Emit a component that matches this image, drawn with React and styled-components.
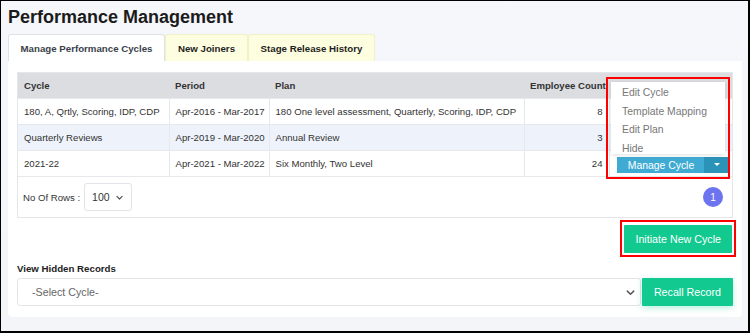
import React from "react";
import styled, { createGlobalStyle } from "styled-components";

const GlobalStyle = createGlobalStyle`
  html, body { margin: 0; padding: 0; }
  body {
    font-family: "Liberation Sans", Arial, sans-serif;
    color: #333;
  }
`;

const rows = [
  { cycle: "180, A, Qrtly, Scoring, IDP, CDP", period: "Apr-2016 - Mar-2017", plan: "180 One level assessment, Quarterly, Scoring, IDP, CDP", count: 8 },
  { cycle: "Quarterly Reviews", period: "Apr-2019 - Mar-2020", plan: "Annual Review", count: 3 },
  { cycle: "2021-22", period: "Apr-2021 - Mar-2022", plan: "Six Monthly, Two Level", count: 24 },
];

const menuItems = ["Edit Cycle", "Template Mapping", "Edit Plan", "Hide"];

const App = () => {
  return (
    <>
      <GlobalStyle />
      <Frame>
        <Title>Performance Management</Title>
        <Tabs>
          <Tab active width={157}>Manage Performance Cycles</Tab>
          <Tab width={83}>New Joiners</Tab>
          <Tab width={127}>Stage Release History</Tab>
        </Tabs>
        <Panel>
          <TableCard>
            <Table>
              <colgroup>
                <col style={{ width: 151 }} />
                <col style={{ width: 100 }} />
                <col style={{ width: 255 }} />
                <col style={{ width: 85 }} />
                <col />
              </colgroup>
              <thead>
                <tr>
                  <Th>Cycle</Th>
                  <Th>Period</Th>
                  <Th>Plan</Th>
                  <Th align="right">Employee Count</Th>
                  <Th />
                </tr>
              </thead>
              <tbody>
                {rows.map((r, i) => (
                  <Tr key={i} striped={i % 2 === 1}>
                    <Td>{r.cycle}</Td>
                    <Td>{r.period}</Td>
                    <Td>{r.plan}</Td>
                    <Td align="right">{r.count}</Td>
                    <Td>{i === rows.length - 1 && (
                      <SplitButton>
                        <span>Manage Cycle</span>
                        <Caret />
                      </SplitButton>
                    )}</Td>
                  </Tr>
                ))}
              </tbody>
            </Table>
            <TableFooter>
              <RowsLabel>No Of Rows :</RowsLabel>
              <RowsSelect>
                100
                <Chevron size={9} />
              </RowsSelect>
              <PageBadge>1</PageBadge>
            </TableFooter>
            <Highlight>
              <Menu>
                {menuItems.map((m) => (
                  <MenuItem key={m}>{m}</MenuItem>
                ))}
              </Menu>
            </Highlight>
          </TableCard>

          <ActionRow>
            <Outline>
              <GreenButton>Initiate New Cycle</GreenButton>
            </Outline>
          </ActionRow>

          <FieldLabel>View Hidden Records</FieldLabel>
          <RecallRow>
            <CycleSelect>
              <span>-Select Cycle-</span>
              <Chevron size={11} />
            </CycleSelect>
            <GreenButton wide>Recall Record</GreenButton>
          </RecallRow>
        </Panel>
      </Frame>
    </>
  );
};

const Chevron = ({ size }) => (
  <svg width={size} height={size} viewBox="0 0 12 12" fill="none">
    <path d="M2.5 4.5 L6 8 L9.5 4.5" stroke="#555" strokeWidth="1.6" strokeLinecap="round" strokeLinejoin="round" />
  </svg>
);

export default App;

const Frame = styled.div`
  box-sizing: border-box;
  width: 750px;
  height: 333px;
  border: 1px solid #000;
  border-right-width: 2px;
  border-bottom-width: 2px;
  background: linear-gradient(#f6f7fa, #f4f6fb 60px, #f4f5f9);
  padding: 0 6px 0 7px;
  overflow: hidden;
`;

const Title = styled.h1`
  margin: 0;
  padding: 6px 0 0 0;
  height: 27px;
  font-size: 18px;
  font-weight: bold;
  color: #1b1b1b;
`;

const Tabs = styled.div`
  display: flex;
  height: 27px;
`;

const Tab = styled.div`
  box-sizing: border-box;
  display: flex;
  align-items: center;
  justify-content: center;
  width: ${(p) => p.width}px;
  font-size: 9.7px;
  font-weight: bold;
  white-space: nowrap;
  color: ${(p) => (p.active ? "#3a3f4a" : "#1e1e1e")};
  background: ${(p) => (p.active ? "#ffffff" : "#fdfde0")};
  border: 1px solid ${(p) => (p.active ? "#dfe1e6" : "#f3f1c8")};
  border-bottom: none;
  border-radius: 3px 3px 0 0;
`;

const Panel = styled.div`
  background: #fff;
  border-radius: 0 0 4px 4px;
  padding: 11px 9px 11px 9px;
  box-shadow: 0 0 1px rgba(0, 0, 0, 0.05);
`;

const TableCard = styled.div`
  position: relative;
  border: 1px solid #e4e6ea;
`;

const Table = styled.table`
  width: 100%;
  border-collapse: collapse;
  table-layout: fixed;
  font-size: 9.6px;
`;

const Th = styled.th`
  height: 25px;
  padding: 0 6px;
  background: #dcdde0;
  color: #333;
  font-weight: bold;
  text-align: ${(p) => p.align || "left"};
  white-space: nowrap;
`;

const Tr = styled.tr`
  background: ${(p) => (p.striped ? "#eef2fa" : "#fff")};
  border-top: 1px solid #e6e8ec;
`;

const Td = styled.td`
  height: 25px;
  padding: 0 6px;
  color: #333;
  text-align: ${(p) => p.align || "left"};
  white-space: nowrap;
  border-right: 1px solid #e6e8ec;
  &:last-child { border-right: none; }
`;

const SplitButton = styled.div`
  display: flex;
  align-items: stretch;
  height: 16px;
  margin: 3px 0 0 1px;
  width: 111px;
  background: #3fabd3;
  color: #fff;
  font-size: 10.4px;
  span {
    flex: 1;
    display: flex;
    align-items: center;
    justify-content: center;
    padding-left: 2px;
  }
`;

const Caret = styled.div`
  width: 24px;
  background: #2c93b8;
  position: relative;
  &::after {
    content: "";
    position: absolute;
    left: 10px;
    top: 6px;
    border-left: 3px solid transparent;
    border-right: 3px solid transparent;
    border-top: 3px solid #fff;
  }
`;

const TableFooter = styled.div`
  display: flex;
  align-items: center;
  height: 40px;
  padding: 0 5px;
  border-top: 1px solid #e6e8ec;
`;

const RowsLabel = styled.span`
  font-size: 9.6px;
  color: #333;
`;

const RowsSelect = styled.div`
  box-sizing: border-box;
  display: flex;
  align-items: center;
  gap: 5px;
  margin-left: 4px;
  height: 28px;
  padding: 0 7px;
  border: 1px solid #e1e3e7;
  border-radius: 3px;
  font-size: 10.5px;
  color: #333;
`;

const PageBadge = styled.div`
  margin-left: auto;
  margin-right: 4px;
  width: 20px;
  height: 20px;
  border-radius: 50%;
  background: #6d74ef;
  color: #fff;
  font-size: 10px;
  display: flex;
  align-items: center;
  justify-content: center;
`;

const Highlight = styled.div`
  position: absolute;
  top: 4px;
  right: 2px;
  width: 124px;
  height: 102px;
  box-sizing: border-box;
  border: 2px solid #f00;
  padding: 3px 3px 23px 3px;
`;

const Menu = styled.div`
  background: #fff;
  height: 100%;
  box-shadow: 0 1px 4px rgba(0, 0, 0, 0.12);
  padding: 2px 0 0 11px;
  box-sizing: border-box;
`;

const MenuItem = styled.div`
  font-size: 10.4px;
  color: #777;
  height: 18.7px;
  line-height: 18.7px;
  white-space: nowrap;
`;

const ActionRow = styled.div`
  display: flex;
  justify-content: flex-end;
  margin-top: 2px;
  margin-right: -3px;
`;

const Outline = styled.div`
  border: 2px solid #f00;
  padding: 3px 2px 2px 2px;
`;

const GreenButton = styled.button`
  height: 28px;
  padding: 0 ${(p) => (p.wide ? "12px" : "11px")};
  background: #12c98f;
  color: #fff;
  border: none;
  border-radius: 1px;
  font-family: "Liberation Sans", Arial, sans-serif;
  font-size: 10.7px;
  box-shadow: ${(p) => (p.wide ? "0 2px 6px rgba(18, 201, 143, 0.3)" : "none")};
  white-space: nowrap;
`;

const FieldLabel = styled.div`
  margin-top: 6px;
  font-size: 9.7px;
  font-weight: bold;
  color: #222;
`;

const RecallRow = styled.div`
  display: flex;
  margin-top: 4px;
  gap: 1px;
`;

const CycleSelect = styled.div`
  flex: 1;
  box-sizing: border-box;
  height: 28px;
  display: flex;
  align-items: center;
  justify-content: space-between;
  padding: 0 4px 0 14px;
  border: 1px solid #e2e4e8;
  border-radius: 3px;
  font-size: 10.7px;
  color: #666;
`;
